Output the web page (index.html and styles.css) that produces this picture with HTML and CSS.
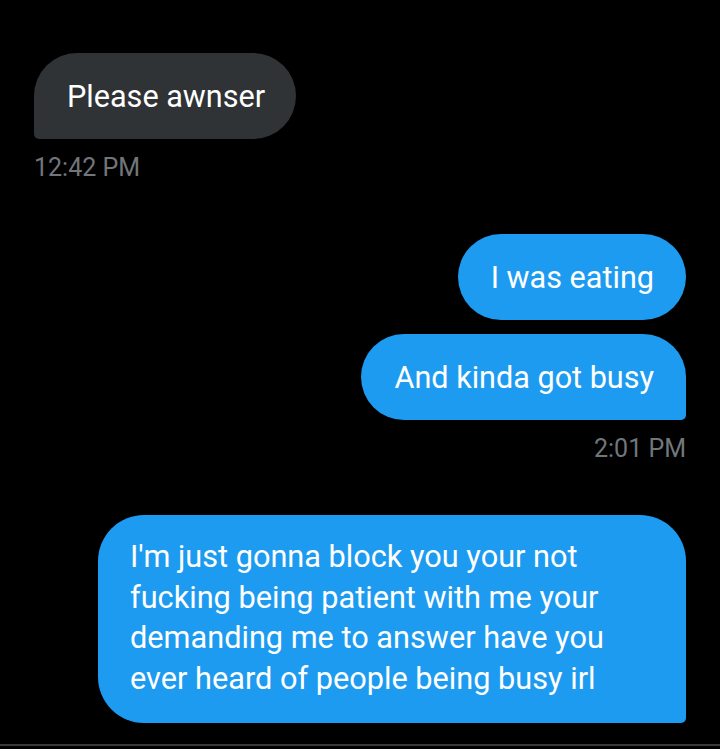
FILE: index.html
```html
<!DOCTYPE html>
<html>
<head>
<meta charset="utf-8">
<link rel="stylesheet" href="styles.css">
</head>
<body>
<main class="chat">
  <div class="msg in">
    <div class="bubble gray">Please awnser</div>
  </div>
  <div class="time time-in">12:42 PM</div>

  <div class="msg out first">
    <div class="bubble blue">I was eating</div>
  </div>
  <div class="msg out">
    <div class="bubble blue tail-r">And kinda got busy</div>
  </div>
  <div class="time time-out">2:01 PM</div>

  <div class="msg out long-msg">
    <div class="bubble blue tail-r long">
      <div class="cond">I'm just gonna block you your not<br>fucking being patient with me your<br>demanding me to answer have you<br>ever heard of people being busy irl</div>
    </div>
  </div>
</main>
<div class="rule"></div>
</body>
</html>
```

FILE: styles.css
```css
html, body {
  margin: 0;
  padding: 0;
  background: #000;
  height: 749px;
  overflow: hidden;
}
body {
  font-family: Roboto, "Liberation Sans", sans-serif;
  color: #fff;
}
.chat {
  padding: 53px 34px 0 34px;
  display: flex;
  flex-direction: column;
  height: 689px;
  box-sizing: border-box;
}
.msg {
  display: flex;
}
.msg.in {
  justify-content: flex-start;
}
.msg.out {
  justify-content: flex-end;
}
.bubble {
  height: 86px;
  box-sizing: border-box;
  padding: 0 32px 0 33px;
  display: flex;
  align-items: center;
  font-size: 30.6px;
  border-radius: 43px;
  white-space: nowrap;
}
.gray {
  background: #2f3336;
  border-bottom-left-radius: 5px;
  padding-right: 31px;
}
.blue {
  background: #1d9bf0;
}
.tail-r {
  border-bottom-right-radius: 5px;
}
.time {
  font-size: 25px;
  color: #71767b;
  line-height: 28px;
  margin-top: 15px;
}
.time-out {
  text-align: right;
}
.msg.first {
  margin-top: 52px;
}
.msg.first + .msg {
  margin-top: 14px;
}
.long-msg {
  margin-top: 52px;
}
.bubble.long {
  height: 208px;
  width: 588px;
  padding: 22px 32px 0 32px;
  align-items: flex-start;
  border-radius: 46px;
  border-bottom-right-radius: 5px;
}
.cond {
  line-height: 40.5px;
  font-size: 30.7px;
}
.rule {
  position: absolute;
  left: 0;
  right: 0;
  top: 744px;
  height: 2px;
  background: #3a3a3c;
}
```
